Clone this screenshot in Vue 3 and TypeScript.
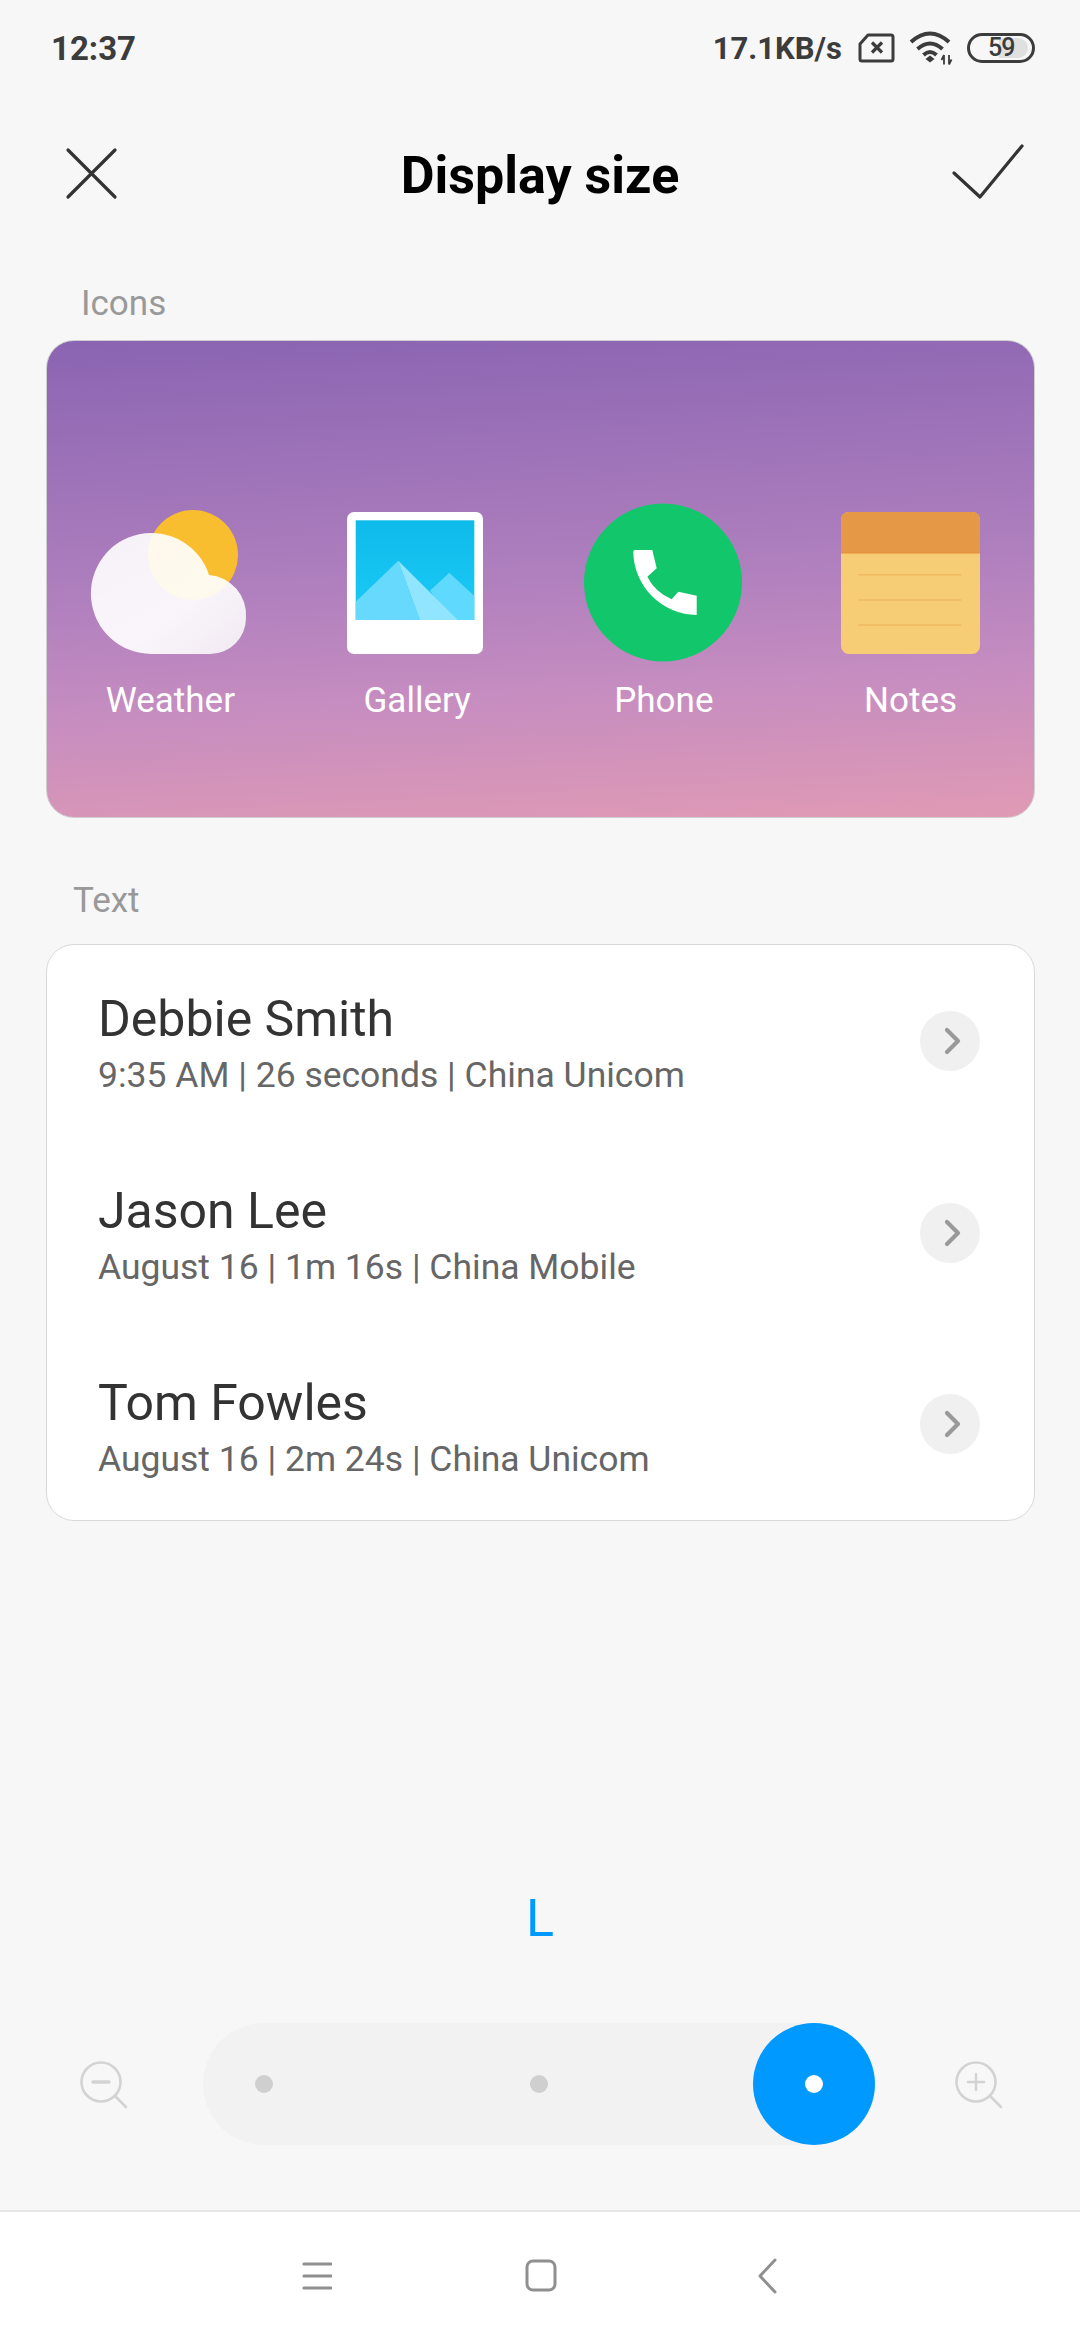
<script setup lang="ts">
interface CallRow { name: string; detail: string }
const calls: CallRow[] = [
  { name: 'Debbie Smith', detail: '9:35 AM | 26 seconds | China Unicom' },
  { name: 'Jason Lee', detail: 'August 16 | 1m 16s | China Mobile' },
  { name: 'Tom Fowles', detail: 'August 16 | 2m 24s | China Unicom' },
]
const stops: boolean[] = [false, false, true]
</script>

<template>
  <div class="screen">
    <div class="status">
      <span class="time">12:37</span>
      <div class="status-right">
        <span class="speed">17.1KB/s</span>
        <svg class="sim" width="37" height="30" viewBox="0 0 37 30" fill="none" stroke="#3c3c3c">
          <path d="M10 2H33a2 2 0 0 1 2 2V26a2 2 0 0 1-2 2H4a2 2 0 0 1-2-2V11Z" stroke-width="3" stroke-linejoin="round"/>
          <path d="M14 9.500L24 19.500M24 9.500L14 19.500" stroke-width="3.200"/>
        </svg>
        <svg class="wifi" width="45" height="34" viewBox="0 0 45 34" fill="none" stroke="#3c3c3c" stroke-width="4">
          <path d="M3 11Q22 -6 41 11"/>
          <path d="M9.500 18Q22 7 34.500 18"/>
          <path d="M15.500 24Q22 18 28.500 24"/>
          <path d="M17.500 28L22 24.500L26.500 28L22 31.500Z" fill="#3c3c3c" stroke="none"/>
          <path d="M36 24V33.500M33.500 29L36 24M41 24V33.500M43.500 28.500L41 33.500" stroke-width="1.800"/>
        </svg>
        <div class="battery"><span class="battery-fill"></span><span class="battery-num">59</span></div>
      </div>
    </div>

    <header class="header">
      <svg class="close" width="56" height="56" viewBox="0 0 56 56" fill="none" stroke="#333" stroke-width="3.200" stroke-linecap="round">
        <path d="M5 5L52 52M52 5L5 52"/>
      </svg>
      <h1 class="title">Display size</h1>
      <svg class="check" width="72" height="60" viewBox="0 0 72 60" fill="none" stroke="#333" stroke-width="3.200" stroke-linecap="round" stroke-linejoin="round">
        <path d="M2 29L28 53L70 2"/>
      </svg>
    </header>

    <div class="label label-icons">Icons</div>
    <section class="wallpaper">
      <div class="app">
        <svg width="180" height="180" viewBox="80 492 180 180">
          <defs>
            <linearGradient id="cloud" x1="0" y1="0" x2="1" y2="1">
              <stop offset="0" stop-color="#fff" stop-opacity=".9"/>
              <stop offset=".6" stop-color="#fff" stop-opacity=".92"/>
              <stop offset="1" stop-color="#fff" stop-opacity=".82"/>
            </linearGradient>
          </defs>
          <circle cx="193" cy="555" r="45" fill="#f9be2f"/>
          <path d="M151 654A60.500 60.500 0 1 1 209 575A40 40 0 0 1 246 618A36 36 0 0 1 210 654Z" fill="url(#cloud)"/>
        </svg>
        <span>Weather</span>
      </div>
      <div class="app">
        <svg width="180" height="180" viewBox="327 492 180 180">
          <defs>
            <linearGradient id="sky" x1="0" y1="0" x2="0" y2="1">
              <stop offset="0" stop-color="#0ebbea"/>
              <stop offset="1" stop-color="#1ccaf6"/>
            </linearGradient>
          </defs>
          <rect x="347" y="512" width="136" height="142" rx="7" fill="#fff"/>
          <rect x="355.700" y="520.300" width="118.600" height="99.700" fill="url(#sky)"/>
          <path d="M430 590.700L449.300 572.700L474.300 596V620H450Z" fill="#60d9ff"/>
          <path d="M355.700 601.700L398.300 560.700L420 620H355.700Z" fill="#66d9fc"/>
          <path d="M398.300 560.700L457.700 620H420Z" fill="#92e5ff"/>
        </svg>
        <span>Gallery</span>
      </div>
      <div class="app">
        <svg width="180" height="180" viewBox="574 492 180 180">
          <circle cx="663" cy="582.500" r="79" fill="#12c76b"/>
          <path d="M633.300 551.700Q633.300 550 635 550H652.300L656.700 568.300L647.300 576.700Q655 592 671.700 599.300L678.300 591.700L696.700 595.700V615A64 64 0 0 1 633.300 551.700Z" fill="#fff"/>
        </svg>
        <span>Phone</span>
      </div>
      <div class="app">
        <svg width="180" height="180" viewBox="821 492 180 180">
          <rect x="841" y="512" width="139" height="142" rx="8" fill="#f6cd75"/>
          <path d="M841 553V520a8 8 0 0 1 8-8H972a8 8 0 0 1 8 8V553Z" fill="#e59845"/>
          <path d="M841 553H980" stroke="#e58f3a" stroke-width="1"/>
          <path d="M858.300 574.700H961.300M858.300 600H961.300M858.300 625H961.300" stroke="#eeb95f" stroke-width="1.500"/>
        </svg>
        <span>Notes</span>
      </div>
    </section>

    <div class="label label-text">Text</div>
    <section class="calls">
      <div v-for="c in calls" :key="c.name" class="call">
        <div class="call-text">
          <div class="call-name">{{ c.name }}</div>
          <div class="call-detail">{{ c.detail }}</div>
        </div>
        <span class="chevron">
          <svg width="60" height="60" viewBox="0 0 60 60" fill="none" stroke="#999" stroke-width="4.200" stroke-linecap="round" stroke-linejoin="round">
            <path d="M27 19L38 30L27 41"/>
          </svg>
        </span>
      </div>
    </section>

    <div class="size-letter">L</div>

    <div class="slider-row">
      <svg width="60" height="60" viewBox="0 0 60 60" fill="none" stroke="#d3d3d3" stroke-width="2.600" stroke-linecap="round">
        <circle cx="30" cy="28" r="19.500"/>
        <path d="M44 42L55 53"/>
        <path d="M22 28H38" stroke-width="3.500"/>
      </svg>
      <div class="track">
        <span v-for="(active, i) in stops" :key="i" class="stop" :class="{ active }"><i></i></span>
      </div>
      <svg width="60" height="60" viewBox="0 0 60 60" fill="none" stroke="#d3d3d3" stroke-width="2.600" stroke-linecap="round">
        <circle cx="30" cy="28" r="19.500"/>
        <path d="M44 42L55 53"/>
        <path d="M22 28H38M30 20V36" stroke-width="2.400"/>
      </svg>
    </div>

    <nav class="nav">
      <svg width="30" height="30" viewBox="0 0 30 30" stroke="#8f8f8f" stroke-width="3.200" stroke-linecap="round">
        <path d="M2 3H29M2 15H29M2 27H29"/>
      </svg>
      <svg width="32" height="34" viewBox="0 0 32 34" fill="none" stroke="#8f8f8f" stroke-width="3">
        <rect x="2" y="2" width="28" height="29" rx="6"/>
      </svg>
      <svg width="22" height="36" viewBox="0 0 22 36" fill="none" stroke="#8f8f8f" stroke-width="3" stroke-linecap="round" stroke-linejoin="round">
        <path d="M18 2L3 18L18 34"/>
      </svg>
    </nav>
  </div>
</template>

<style>
html, body { margin: 0; background: #f7f7f7; }
</style>

<style scoped>
.screen {
  width: 1080px;
  height: 2340px;
  display: flex;
  flex-direction: column;
  background: #f7f7f7;
  font-family: Roboto, "Liberation Sans", sans-serif;
  overflow: hidden;
}
.status {
  height: 96px;
  flex: none;
  padding: 0 45px 0 51px;
  display: flex;
  align-items: center;
  justify-content: space-between;
  color: #3c3c3c;
  font-size: 33px;
}
.time { font-weight: 700; }
.speed { font-size: 31px; font-weight: 700; }
.status-right { display: flex; align-items: center; }
.sim { margin-left: 16px; }
.wifi { margin-left: 13px; }
.battery {
  margin-left: 14px;
  width: 68px;
  height: 30px;
  box-sizing: border-box;
  border: 3px solid #3c3c3c;
  border-radius: 15px;
  position: relative;
  display: flex;
  align-items: center;
  padding-left: 18px;
  overflow: hidden;
}
.battery-fill {
  position: absolute;
  left: 3px;
  top: 2px;
  bottom: 2px;
  width: 55px;
  background: #e0e0e0;
  border-radius: 0 10px 10px 0;
  clip-path: inset(0 0 0 26px);
}
.battery-num {
  position: relative;
  font-size: 25px;
  letter-spacing: -1px;
  font-weight: 500;
  line-height: 24px;
}
.header {
  height: 158px;
  flex: none;
  padding: 0 56px 0 63px;
  display: flex;
  align-items: center;
  justify-content: space-between;
  position: relative;
}
.close { margin-top: -4px; }
.check { margin-top: -3px; }
.title {
  margin: 0;
  font-size: 52px;
  font-weight: 700;
  color: #000;
  position: absolute;
  left: 0;
  right: 0;
  text-align: center;
  pointer-events: none;
}
.label {
  font-size: 35px;
  color: #999;
  line-height: 40px;
  flex: none;
}
.label-icons { margin: 30px 0 16px 81px; }
.label-text { margin: 63px 0 23px 73px; }
.wallpaper {
  flex: none;
  margin-left: 46px;
  width: 989px;
  height: 478px;
  box-sizing: border-box;
  border: 1px solid #cfcfcf;
  border-radius: 28px;
  background: linear-gradient(177deg, #8a64b2 0%, #b080be 50%, #c68dc0 72%, #e09ab4 100%);
  display: grid;
  grid-template-columns: repeat(4, 1fr);
  padding-top: 151px;
}
.app {
  display: flex;
  flex-direction: column;
  align-items: center;
  height: 240px;
}
.app span {
  color: #fff;
  font-size: 35px;
  line-height: 40px;
  margin-top: 9px;
}
.calls {
  flex: none;
  margin-left: 46px;
  width: 989px;
  box-sizing: border-box;
  border: 1px solid #d8d8d8;
  border-radius: 28px;
  background: #fff;
}
.call {
  height: 191.700px;
  padding: 0 54px 0 51px;
  display: flex;
  align-items: center;
  justify-content: space-between;
}
.call-text { padding-top: 5px; }
.call-name {
  font-size: 50px;
  line-height: 58px;
  color: #333;
}
.call-detail {
  font-size: 35.500px;
  line-height: 42px;
  color: #666;
  margin-top: 6px;
}
.chevron {
  width: 60px;
  height: 60px;
  border-radius: 50%;
  background: #f0f0f0;
  display: flex;
}
.size-letter {
  flex: none;
  margin-top: 368px;
  text-align: center;
  font-size: 52px;
  line-height: 60px;
  color: #0099ff;
  font-weight: 400;
}
.slider-row {
  flex: none;
  margin-top: 74px;
  padding-left: 71px;
  display: flex;
  align-items: center;
  gap: 71.500px;
}
.track {
  width: 672px;
  height: 122px;
  border-radius: 61px;
  background: #f2f2f2;
  display: flex;
  justify-content: space-between;
}
.stop {
  width: 122px;
  height: 122px;
  border-radius: 50%;
  display: flex;
  align-items: center;
  justify-content: center;
}
.stop i {
  width: 18px;
  height: 18px;
  border-radius: 50%;
  background: #cfcfcf;
}
.stop.active { background: #0099ff; }
.stop.active i { background: #fff; }
.nav {
  margin-top: auto;
  height: 130px;
  flex: none;
  box-sizing: border-box;
  border-top: 2px solid #e6e6e6;
  background: #fff;
  display: grid;
  grid-template-columns: 302px 30px 193px 32px 200px 22px;
  align-items: center;
}
.nav svg:nth-child(1) { grid-column: 2; }
.nav svg:nth-child(2) { grid-column: 4; }
.nav svg:nth-child(3) { grid-column: 6; }
</style>
